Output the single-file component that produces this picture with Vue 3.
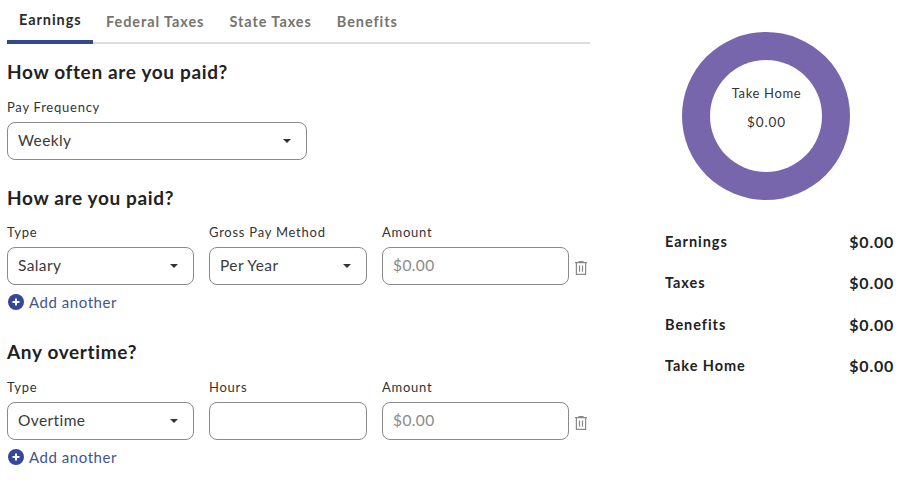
<template>
  <div class="page">
    <div class="form-col">
      <div class="tabs">
        <button
          v-for="tab in tabs"
          :key="tab"
          class="tab"
          :class="{ active: tab === 'Earnings' }"
        >
          {{ tab }}
        </button>
      </div>

      <h2 class="heading first">How often are you paid?</h2>
      <div class="field freq">
        <label>Pay Frequency</label>
        <div class="control select">
          <span>Weekly</span>
          <i class="caret"></i>
        </div>
      </div>

      <h2 class="heading second">How are you paid?</h2>
      <div class="row">
        <div class="field wide">
          <label>Type</label>
          <div class="control select"><span>Salary</span><i class="caret"></i></div>
        </div>
        <div class="field narrow">
          <label>Gross Pay Method</label>
          <div class="control select"><span>Per Year</span><i class="caret"></i></div>
        </div>
        <div class="field wide">
          <label>Amount</label>
          <div class="control"><span class="placeholder">$0.00</span></div>
        </div>
        <svg class="trash" viewBox="0 0 12 14" width="12" height="14">
          <path d="M0 1.6h12M4 1.6V.6h4v1M1.4 1.6v11.8h9.2V1.6M4.5 4.4v6.4M7.5 4.4v6.4" fill="none" stroke="#8a8a8a" stroke-width="1.2" />
        </svg>
      </div>
      <a class="add">
        <svg viewBox="0 0 16 16" width="16" height="16">
          <circle cx="8" cy="8" r="8" fill="#34479a" />
          <path d="M8 4.5v7M4.5 8h7" stroke="#fff" stroke-width="2" />
        </svg>
        Add another
      </a>

      <h2 class="heading third">Any overtime?</h2>
      <div class="row">
        <div class="field wide">
          <label>Type</label>
          <div class="control select"><span>Overtime</span><i class="caret"></i></div>
        </div>
        <div class="field narrow">
          <label>Hours</label>
          <div class="control"></div>
        </div>
        <div class="field wide">
          <label>Amount</label>
          <div class="control"><span class="placeholder">$0.00</span></div>
        </div>
        <svg class="trash" viewBox="0 0 12 14" width="12" height="14">
          <path d="M0 1.6h12M4 1.6V.6h4v1M1.4 1.6v11.8h9.2V1.6M4.5 4.4v6.4M7.5 4.4v6.4" fill="none" stroke="#8a8a8a" stroke-width="1.2" />
        </svg>
      </div>
      <a class="add">
        <svg viewBox="0 0 16 16" width="16" height="16">
          <circle cx="8" cy="8" r="8" fill="#34479a" />
          <path d="M8 4.5v7M4.5 8h7" stroke="#fff" stroke-width="2" />
        </svg>
        Add another
      </a>
    </div>

    <div class="summary-col">
      <div class="donut">
        <div class="donut-hole">
          <span>Take Home</span>
          <span class="hole-value">$0.00</span>
        </div>
      </div>
      <div class="summary">
        <div v-for="item in summary" :key="item" class="summary-row">
          <span>{{ item }}</span>
          <span class="money">$0.00</span>
        </div>
      </div>
    </div>
  </div>
</template>

<script setup>
const tabs = ['Earnings', 'Federal Taxes', 'State Taxes', 'Benefits']
const summary = ['Earnings', 'Taxes', 'Benefits', 'Take Home']
</script>

<style>
html, body {
  background: #fff;
}
</style>

<style scoped>
.page {
  display: flex;
  width: 904px;
  height: 485px;
  padding-left: 7px;
  box-sizing: border-box;
  overflow: hidden;
  font-family: Lato, "Liberation Sans", sans-serif;
  color: #2b2b2b;
}

.form-col {
  width: 583px;
}

.tabs {
  display: flex;
  height: 44px;
  box-sizing: border-box;
  border-bottom: 2px solid #dcdcdc;
}

.tab {
  background: none;
  border: none;
  padding: 0 12px 2px 12px;
  margin-right: 1px;
  height: 44px;
  font: 700 14.5px Lato, sans-serif;
  letter-spacing: 0.92px;
  white-space: nowrap;
  color: #77736d;
}

.tab.active {
  width: 86px;
  padding-top: 0;
  color: #2b2b2b;
  border-bottom: 4px solid #34488f;
}

.heading {
  margin: 0;
  font-size: 19px;
  line-height: 24px;
  font-weight: 700;
  letter-spacing: 0.65px;
  color: #222;
}

.heading.first {
  margin-top: 16px;
}

.heading.second {
  margin-top: 26px;
  margin-bottom: 14px;
}

.heading.third {
  margin-top: 29px;
  margin-bottom: 15px;
}

.freq {
  width: 300px;
  margin-top: 15px;
}

.field label {
  display: block;
  font-size: 13px;
  line-height: 16px;
  letter-spacing: 0.75px;
  color: #333;
  margin-bottom: 7px;
}

.control {
  height: 38px;
  box-sizing: border-box;
  border: 1px solid #8a8a8a;
  border-radius: 8px;
  padding: 0 10px 2px;
  display: flex;
  align-items: center;
  justify-content: space-between;
  font-size: 15.5px;
  letter-spacing: 0.4px;
  color: #3a3a3a;
}

.caret {
  width: 0;
  height: 0;
  margin: 2px 5px 0 0;
  border-left: 4px solid transparent;
  border-right: 4px solid transparent;
  border-top: 4px solid #333;
}

.placeholder {
  color: #8a8a8a;
}

.row {
  display: flex;
  gap: 15px;
}

.wide {
  width: 187px;
}

.narrow {
  width: 158px;
}

.trash {
  margin: 37px 0 0 -9px;
}

.add {
  display: flex;
  align-items: center;
  gap: 5px;
  margin: 7px 0 0 1px;
  height: 19px;
  font-size: 15px;
  letter-spacing: 0.55px;
  color: #44548f;
}

.summary-col {
  margin-left: 75px;
  width: 229px;
}

.donut {
  width: 168px;
  height: 168px;
  margin: 32px 0 0 17px;
  border-radius: 50%;
  background: #7866ad;
  display: flex;
  align-items: center;
  justify-content: center;
}

.donut-hole {
  width: 112px;
  height: 112px;
  border-radius: 50%;
  background: #fff;
  display: flex;
  flex-direction: column;
  align-items: center;
  justify-content: center;
  gap: 13px;
  font-size: 13px;
  letter-spacing: 0.65px;
  color: #333;
  padding: 0 0 17px 1px;
  box-sizing: border-box;
}

.hole-value {
  font-size: 13.5px;
  letter-spacing: 0.9px;
}

.summary {
  margin-top: 21px;
}

.summary-row {
  display: flex;
  justify-content: space-between;
  align-items: center;
  height: 41.3px;
  font-size: 14.5px;
  font-weight: 700;
  letter-spacing: 0.95px;
  color: #222;
}

.money {
  font-size: 16px;
  letter-spacing: 0.75px;
}
</style>
